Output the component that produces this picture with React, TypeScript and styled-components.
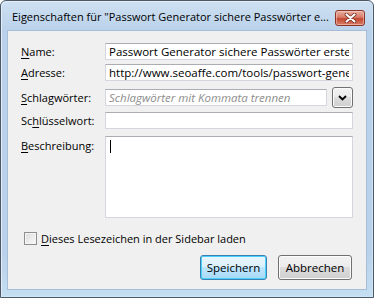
import styled, { createGlobalStyle } from "styled-components";

const Global = createGlobalStyle`
  html, body {
    margin: 0;
    padding: 0;
    background: #ffffff;
  }
  body {
    font-family: "Open Sans", "Noto Sans", sans-serif;
    font-size: 11px;
    color: #000;
  }
`;

const Page = styled.div`
  width: 376px;
  height: 299px;
  overflow: hidden;
`;

const Window = styled.div`
  width: 374px;
  height: 298px;
  box-sizing: border-box;
  border: 1px solid #4a5868;
  border-radius: 6px 6px 0 0;
  background: linear-gradient(#cfe0f2, #b9d1ea 30px, #b9d1ea 250px, #c4def2);
  display: flex;
  flex-direction: column;
  padding: 0 6px 7px 6px;
  box-shadow: inset 1px 1px 0 #e4eef9, inset -1px -1px 0 #cfe6f7;
`;

const TitleBar = styled.div`
  height: 29px;
  display: flex;
  align-items: center;
  gap: 2px;
  padding-left: 5px;
  padding-right: 2px;
`;

const Title = styled.div`
  flex: 1;
  min-width: 0;
  font-size: 11px;
  white-space: nowrap;
  color: #000;
  padding-top: 2px;
`;

const CloseButton = styled.div`
  width: 30px;
  height: 16px;
  flex-shrink: 0;
  margin-top: 4px;
  box-sizing: border-box;
  border: 1px solid #8a3528;
  border-radius: 3px;
  background: linear-gradient(#eab0a2, #d67a68 45%, #c4462f 55%, #d8806a);
  box-shadow: inset 0 0 0 1px rgba(255, 215, 205, 0.5);
  display: flex;
  align-items: center;
  justify-content: center;
`;

const Client = styled.div`
  flex: 1;
  background: #f0f0f0;
  border: 1px solid #a6bed8;
  display: flex;
  flex-direction: column;
  padding: 12px 13px 0 13px;
`;

const Row = styled.div<{ $top?: number; $align?: string }>`
  display: flex;
  align-items: ${(p) => p.$align || "center"};
  margin-top: ${(p) => p.$top ?? 0}px;
`;

const Label = styled.div`
  width: 84px;
  flex-shrink: 0;
  white-space: nowrap;
`;

const Key = styled.span`
  text-decoration: underline;
  text-underline-offset: 2px;
`;

const TextBox = styled.input`
  flex: 1;
  min-width: 0;
  height: 17px;
  box-sizing: border-box;
  margin: 0;
  border: 1px solid #d3d7dd;
  border-top-color: #abadb3;
  background: #fff;
  padding: 0 3px;
  font-family: inherit;
  font-size: 11.5px;
  color: #000;
  outline: none;
  &::placeholder {
    color: #8d8d8d;
    font-style: italic;
  }
`;

const DropButton = styled.div`
  width: 21px;
  height: 21px;
  margin-left: 5px;
  box-sizing: border-box;
  border: 1px solid #707070;
  border-radius: 3px;
  background: linear-gradient(#f2f2f2, #ebebeb 50%, #dddddd 50%, #cfcfcf);
  box-shadow: inset 0 0 0 1px #fcfcfc;
  display: flex;
  align-items: center;
  justify-content: center;
`;

const MemoLabel = styled(Label)`
  padding-top: 2px;
`;

const Memo = styled.div`
  flex: 1;
  height: 82px;
  box-sizing: border-box;
  border: 1px solid #d3d7dd;
  border-top-color: #abadb3;
  background: #fff;
  padding: 3px 4px;
`;

const Caret = styled.div`
  width: 1px;
  height: 13px;
  background: #000;
`;

const CheckRow = styled.label`
  display: flex;
  align-items: center;
  margin-top: 13px;
  margin-left: 3px;
  gap: 4px;
`;

const CheckBox = styled.span`
  width: 13px;
  height: 13px;
  box-sizing: border-box;
  border: 1px solid #8e8f8f;
  background: linear-gradient(135deg, #dcdcdc, #f4f4f4 80%);
  box-shadow: inset 0 0 0 1px #f4f4f4;
`;

const Buttons = styled.div`
  display: flex;
  justify-content: flex-end;
  gap: 11px;
  margin-top: 9px;
  padding-right: 1px;
`;

const Button = styled.div<{ $default?: boolean; $w: number }>`
  width: ${(p) => p.$w}px;
  height: 25px;
  box-sizing: border-box;
  border: 1px solid ${(p) => (p.$default ? "#3c7fb1" : "#707070")};
  border-radius: 3px;
  background: ${(p) =>
    p.$default
      ? "linear-gradient(#eaf6fd, #d9f0fc 50%, #bee6fd 50%, #a7d9f5)"
      : "linear-gradient(#f2f2f2, #ebebeb 50%, #dddddd 50%, #cfcfcf)"};
  box-shadow: inset 0 0 0 1px ${(p) => (p.$default ? "#48d1fc" : "#fcfcfc")};
  display: flex;
  align-items: center;
  justify-content: center;
  font-size: 11.5px;
`;

export default function App() {
  return (
    <Page>
      <Global />
      <Window>
        <TitleBar>
          <Title>Eigenschaften für "Passwort Generator sichere Passwörter e...</Title>
          <CloseButton>
            <svg width="13" height="10" viewBox="0 0 13 10">
              <path d="M2.5 1.5 L10.5 8.5 M10.5 1.5 L2.5 8.5" stroke="#6a2216" strokeWidth="3.6" strokeLinecap="round" />
              <path d="M2.5 1.5 L10.5 8.5 M10.5 1.5 L2.5 8.5" stroke="#ffffff" strokeWidth="2.2" strokeLinecap="round" />
            </svg>
          </CloseButton>
        </TitleBar>
        <Client>
          <Row>
            <Label>
              <Key>N</Key>ame:
            </Label>
            <TextBox defaultValue="Passwort Generator sichere Passwörter erstellen" />
          </Row>
          <Row $top={4}>
            <Label>
              <Key>A</Key>dresse:
            </Label>
            <TextBox defaultValue="http://www.seoaffe.com/tools/passwort-generator/" />
          </Row>
          <Row $top={6}>
            <Label>
              <Key>S</Key>chlagwörter:
            </Label>
            <TextBox placeholder="Schlagwörter mit Kommata trennen" />
            <DropButton>
              <svg width="9" height="6" viewBox="0 0 9 6">
                <path d="M1 1 L4.5 4.5 L8 1" fill="none" stroke="#000" strokeWidth="1.8" />
              </svg>
            </DropButton>
          </Row>
          <Row $top={4}>
            <Label>
              Sc<Key>h</Key>lüsselwort:
            </Label>
            <TextBox />
          </Row>
          <Row $top={7} $align="flex-start">
            <MemoLabel>
              <Key>B</Key>eschreibung:
            </MemoLabel>
            <Memo>
              <Caret />
            </Memo>
          </Row>
          <CheckRow>
            <CheckBox />
            <span>
              <Key>D</Key>ieses Lesezeichen in der Sidebar laden
            </span>
          </CheckRow>
          <Buttons>
            <Button $default $w={67}>Speichern</Button>
            <Button $w={74}>Abbrechen</Button>
          </Buttons>
        </Client>
      </Window>
    </Page>
  );
}
